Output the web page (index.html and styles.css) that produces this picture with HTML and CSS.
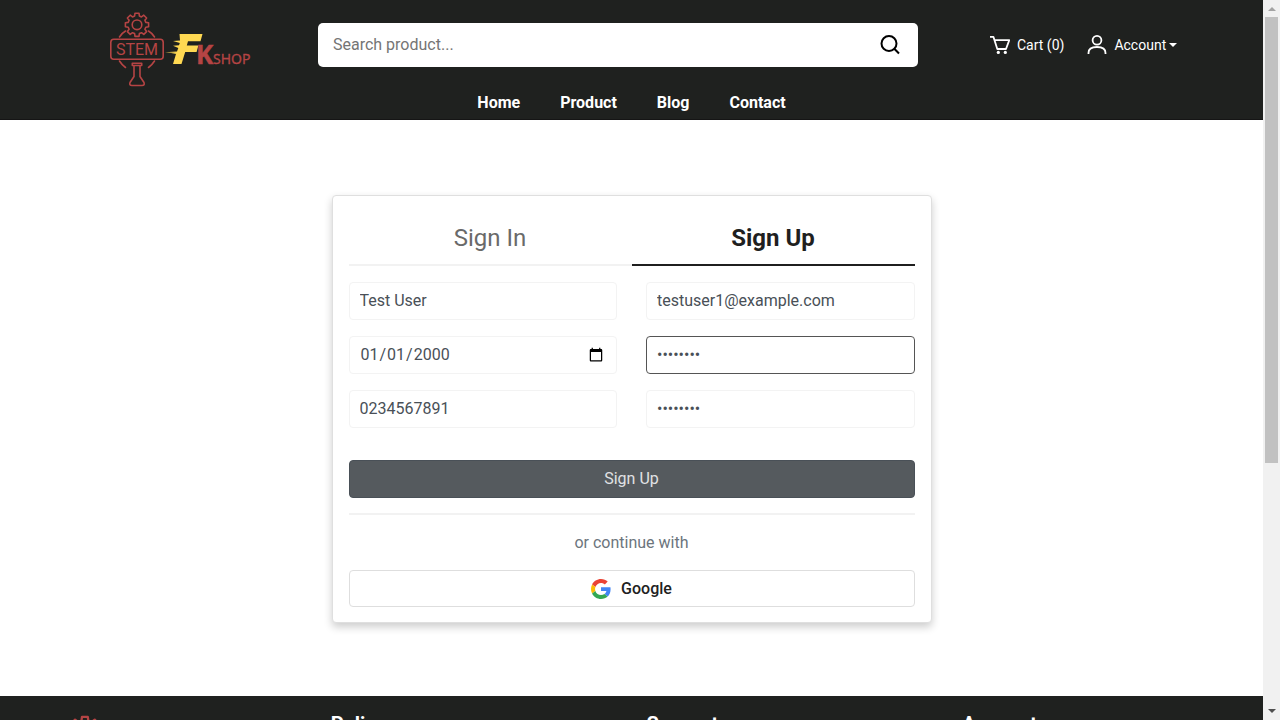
FILE: index.html
```html
<!DOCTYPE html>
<html lang="en">
<head>
<meta charset="utf-8">
<meta name="viewport" content="width=device-width, initial-scale=1">
<title>Sign Up</title>
<link rel="stylesheet" href="styles.css">
</head>
<body>
<svg class="defs" width="0" height="0" aria-hidden="true">
  <symbol id="logo" viewBox="0 0 144 78">
    <g fill="none" stroke="#b54444" stroke-width="1.6" stroke-linejoin="round" stroke-linecap="round">
      <path transform="translate(29 14.8)" d="M-2.400-8.800-2-11.600H2L2.400-8.800 4.500-7.900 6.800-9.600 9.600-6.800 7.900-4.500 8.800-2.400 11.600-2V2L8.800 2.400 7.900 4.500 9.600 6.800 6.800 9.600 4.500 7.900 2.400 8.800 2 11.600H-2L-2.400 8.800-4.500 7.900-6.800 9.600-9.600 6.800-7.900 4.500-8.800 2.400-11.600 2V-2L-8.800-2.400-7.900-4.500-9.600-6.800-6.800-9.600-4.500-7.900z"/>
      <circle cx="29" cy="14.8" r="4.8"/>
      <rect x="2.800" y="29.200" width="52.400" height="20" rx="3"/>
      <path d="M11.500 27q2.500-4 6-6M46.500 27q-2.500-4-6-6M11.500 51q2.500 4 6 6.500M46.500 51q-2.500 4-6 6.500"/>
      <path d="M24.300 53.200h9.400v2.300h-9.400zM26 55.500v11l-4 6q-1 3 2 3h10q3 0 2-3l-4-6v-11"/>
    </g>
    <text class="logo-stem" x="29" y="45" text-anchor="middle">STEM</text>
    <path fill="#ffd952" d="M71.500 24H94.500l-2 7.200H80l-1.200 4.300h11.600l-1.800 6.500H77.200L73.500 54H65l3-10h-5l5.500-1-11.500-.7 12-.9 1.300-3.400-5.300-2.200 6-.5.8-2.300-6.800-2 7-.4z"/>
    <text class="logo-k" x="88" y="54">K</text>
    <text class="logo-shop" x="105" y="54">SHOP</text>
  </symbol>
</svg>
<div class="page">
  <header class="header">
    <div class="topbar">
      <a class="brand" href="#" aria-label="STEM FK Shop"><svg class="logo"><use href="#logo"/></svg></a>
      <form class="search" role="search">
        <input class="search-input" type="text" placeholder="Search product..." aria-label="Search product">
        <button class="search-button" type="button" aria-label="Search">
          <svg width="20" height="20" viewBox="0 0 20 20" fill="none" stroke="#000" stroke-width="2"><circle cx="9" cy="8.500" r="7.500"/><path d="m14.300 13.800 4.700 4.700"/></svg>
        </button>
      </form>
      <div class="actions">
        <a class="action" href="#">
          <svg width="20" height="20" viewBox="0 0 20 20" fill="none" stroke="#fff" stroke-width="1.800" stroke-linejoin="round"><path d="M0 1.800h3.400L7.300 14H16l3.200-8.800H4.600"/><g fill="#fff" stroke="none"><circle cx="8.300" cy="17.400" r="1.600"/><circle cx="15.300" cy="17.400" r="1.600"/></g></svg>
          Cart (0)</a>
        <button class="action" type="button">
          <svg width="20" height="20" viewBox="0 0 20 20" fill="none" stroke="#fff" stroke-width="1.800"><circle cx="10" cy="5.300" r="4.400"/><path d="M1.500 19v-1q0-6 8.500-6t8.500 6v1"/></svg>
          Account<span class="caret"></span></button>
      </div>
    </div>
    <nav class="nav">
      <a href="#">Home</a><a href="#">Product</a><a href="#">Blog</a><a href="#">Contact</a>
    </nav>
  </header>
  <main class="main">
    <section class="card">
      <div class="tabs">
        <button class="tab" type="button">Sign In</button>
        <button class="tab tab-active" type="button">Sign Up</button>
      </div>
      <form>
        <div class="fields">
          <input class="field" type="text" value="Test User" aria-label="Name">
          <input class="field" type="email" value="testuser1@example.com" aria-label="Email">
          <input class="field field-date" type="date" value="2000-01-01" aria-label="Date of birth">
          <input class="field field-current" type="password" value="password" aria-label="Password">
          <input class="field" type="tel" value="0234567891" aria-label="Phone number">
          <input class="field" type="password" value="password" aria-label="Confirm password">
        </div>
        <button class="submit" type="button">Sign Up</button>
      </form>
      <hr class="rule">
      <p class="alternative">or continue with</p>
      <button class="google" type="button">
        <svg width="20" height="20" viewBox="0 0 48 48"><path fill="#EA4335" d="M24 9.500c3.540 0 6.710 1.220 9.210 3.600l6.850-6.850C35.900 2.380 30.470 0 24 0 14.620 0 6.510 5.380 2.560 13.220l7.980 6.190C12.430 13.720 17.740 9.500 24 9.500z"/><path fill="#4285F4" d="M46.980 24.550c0-1.570-.15-3.090-.38-4.550H24v9.020h12.940c-.58 2.960-2.260 5.480-4.780 7.180l7.730 6c4.510-4.180 7.090-10.360 7.090-17.650z"/><path fill="#FBBC05" d="M10.530 28.590c-.48-1.450-.76-2.990-.76-4.590s.27-3.140.76-4.590l-7.980-6.190C.92 16.460 0 20.120 0 24c0 3.880.92 7.540 2.560 10.780l7.970-6.190z"/><path fill="#34A853" d="M24 48c6.480 0 11.930-2.130 15.890-5.810l-7.730-6c-2.150 1.450-4.920 2.300-8.160 2.300-6.260 0-11.570-4.220-13.470-9.910l-7.980 6.190C6.510 42.620 14.620 48 24 48z"/></svg>
        Google</button>
    </section>
  </main>
  <footer class="footer">
    <div class="footer-brand"><svg class="footer-logo" aria-hidden="true"><use href="#logo"/></svg></div>
    <h2>Policy</h2>
    <h2>Support</h2>
    <h2>Account</h2>
  </footer>
</div>
<div class="scrollbar" aria-hidden="true">
  <span class="arrow arrow-up"></span>
  <span class="thumb"></span>
  <span class="arrow arrow-down"></span>
</div>
</body>
</html>
```
FILE: styles.css
```css
* { box-sizing: border-box; }
body {
  margin: 0;
  display: flex;
  height: 100vh;
  overflow: hidden;
  background: #fff;
  color: #212529;
  font: 16px/24px Roboto, sans-serif;
}
button, input { font: inherit; margin: 0; }
button { cursor: pointer; }
a { color: inherit; text-decoration: none; }
.defs { position: absolute; }
.page { flex: 1; min-width: 0; overflow: hidden; }

.header {
  height: 120px;
  background: #1f211f;
  border-bottom: 1px solid #151515;
  color: #fff;
}
.topbar { display: flex; align-items: center; height: 90px; }
.brand { flex: 0 0 318px; padding: 8px 0 0 108px; }
.logo { display: block; width: 144px; height: 78px; }
.logo-stem { font: 16px Roboto, sans-serif; fill: #b54444; }
.logo-k { font: bold 26px "Open Sans", sans-serif; fill: #b54444; stroke: #b54444; stroke-width: 0.5px; }
.logo-shop { font: 14px "Open Sans", sans-serif; fill: #b54444; stroke: #b54444; stroke-width: 0.4px; }
.search {
  flex: 0 1 600px;
  display: flex;
  height: 44px;
  background: #fff;
  border-radius: 5px;
}
.search-input {
  flex: 1;
  min-width: 0;
  padding: 0 15px;
  border: 0;
  background: none;
  outline: 0;
}
.search-input::placeholder { color: #757575; }
.search-button {
  display: grid;
  place-items: center;
  width: 56px;
  padding: 0;
  border: 0;
  background: none;
}
.actions { flex: 1; display: flex; gap: 23px; padding-left: 72px; }
.action {
  display: flex;
  align-items: center;
  gap: 7px;
  padding: 0;
  border: 0;
  background: none;
  color: #fff;
  font-size: 14px;
  white-space: nowrap;
}
.caret {
  margin-left: -4px;
  border: 4px solid transparent;
  border-top-color: #fff;
  border-bottom: 0;
}
.nav { display: flex; justify-content: center; gap: 40px; padding-top: 1px; font-weight: 700; }

.main { padding: 75px 16px 73px; }
.card {
  max-width: 600px;
  margin: 0 auto;
  padding: 15px;
  background: #fff;
  border: 1px solid #dfdfdf;
  border-radius: 4px;
  box-shadow: 0 4px 8px rgba(0, 0, 0, 0.2);
}
.tabs { display: flex; margin: 0 1px 16px; }
.tab {
  flex: 1;
  height: 55px;
  padding: 0;
  border: 0;
  border-bottom: 2px solid #f2f2f2;
  background: none;
  color: #6a6a6a;
  font-size: 24px;
}
.tab-active { border-color: #1f1f1f; color: #1f1f1f; font-weight: 700; }
.fields { display: grid; grid-template-columns: 1fr 1fr; gap: 16px 29px; margin: 0 1px 32px; }
.field {
  width: 100%;
  min-width: 0;
  height: 38px;
  padding: 0 10px 2px;
  border: 1px solid #f3f3f3;
  border-radius: 4px;
  background: #fff;
  color: #495057;
  outline: 0;
}
.field-date { padding-bottom: 0; }
.field-current { border-color: #555; }
.submit, .google {
  display: flex;
  align-items: center;
  justify-content: center;
  width: calc(100% - 2px);
  margin: 0 1px;
  border-radius: 4px;
}
.submit { height: 38px; border: 1px solid #495057; background: #555a5e; color: #e0e2e4; }
.rule { margin: 15px 1px 16px; border: 0; border-top: 2px solid #f2f2f2; }
.alternative { margin: 0 0 15px; color: #6c757d; text-align: center; }
.google { gap: 10px; height: 37px; border: 1px solid #dedede; background: #fff; color: #212121; font-weight: 500; }

.footer {
  display: grid;
  grid-template-columns: repeat(4, 1fr);
  align-items: start;
  padding: 16px 0;
  background: #1f211f;
  color: #fff;
}
.footer h2 { margin: 0; padding: 0 15px; font-size: 20px; line-height: 24px; font-weight: 700; }
.footer-brand { padding-left: 43px; }
.footer-logo { display: block; width: 208px; height: 113px; }

.scrollbar {
  flex: 0 0 17px;
  display: flex;
  flex-direction: column;
  align-items: center;
  padding: 7px 0;
  background: #f1f1f1;
}
.thumb { width: 13px; height: 62vh; margin-top: 6px; background: #c1c1c1; }
.arrow { border: 4px solid transparent; }
.arrow-up { border-top: 0; border-bottom-color: #a3a3a3; }
.arrow-down { margin-top: auto; border-bottom: 0; border-top-color: #505050; }
```
